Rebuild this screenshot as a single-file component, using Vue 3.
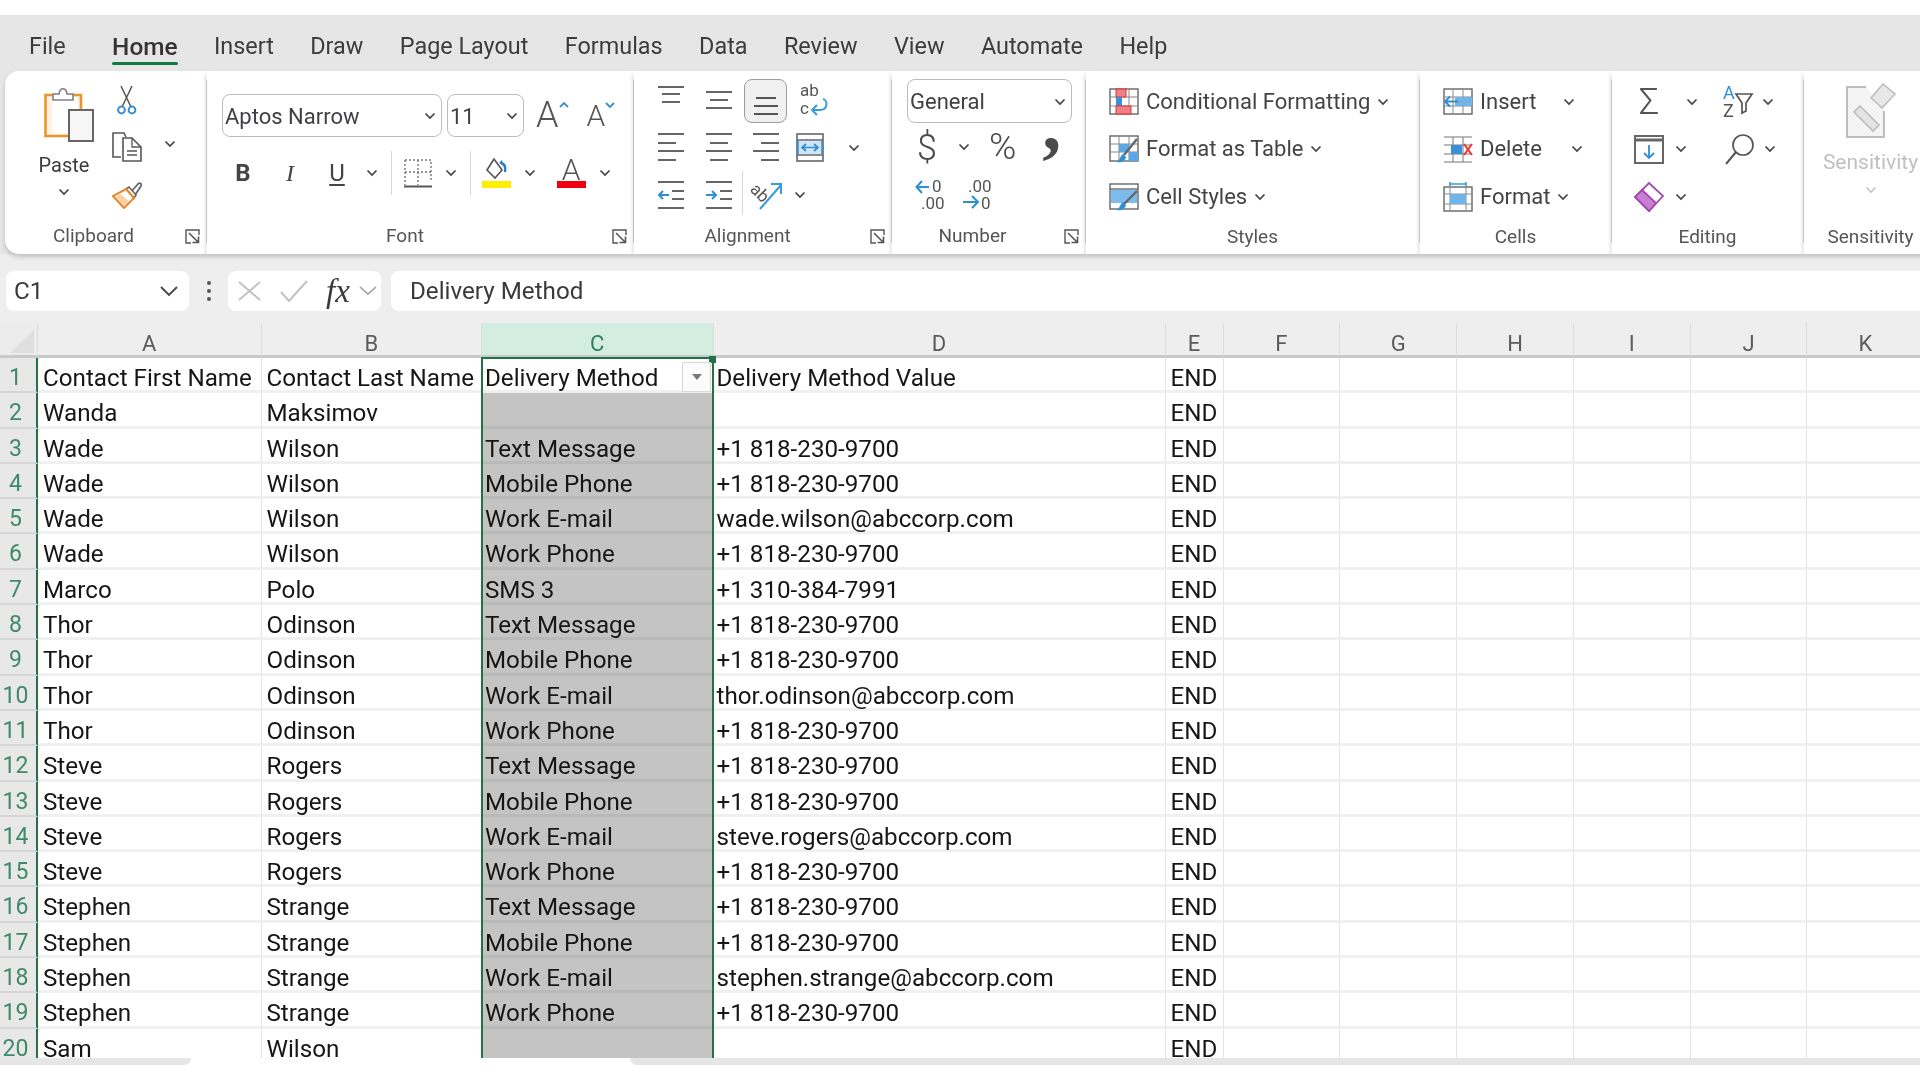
<script setup>
import { h } from "vue";

const tabs = ["File", "Home", "Insert", "Draw", "Page Layout", "Formulas", "Data", "Review", "View", "Automate", "Help"];
const letters = ["A", "B", "C", "D", "E", "F", "G", "H", "I", "J", "K"];

const phone = "+1 818-230-9700";

function person(first, last, email) {
  return [
    [first, last, "Text Message", phone],
    [first, last, "Mobile Phone", phone],
    [first, last, "Work E-mail", email],
    [first, last, "Work Phone", phone],
  ];
}

const rows = [
  ["Contact First Name", "Contact Last Name", "Delivery Method", "Delivery Method Value"],
  ["Wanda", "Maksimov", "", ""],
  ...person("Wade", "Wilson", "wade.wilson@abccorp.com"),
  ["Marco", "Polo", "SMS 3", "+1 310-384-7991"],
  ...person("Thor", "Odinson", "thor.odinson@abccorp.com"),
  ...person("Steve", "Rogers", "steve.rogers@abccorp.com"),
  ...person("Stephen", "Strange", "stephen.strange@abccorp.com"),
  ["Sam", "Wilson", "", ""],
];

const emptyCols = 6;

// small dropdown arrow used all over the ribbon
const Chev = (props) =>
  h("svg", { width: 12, height: 8, viewBox: "0 0 12 8", fill: "none" }, [
    h("path", { d: "M1.5 1.5 6 6l4.5-4.5", stroke: props.color || "#444", "stroke-width": 1.7 }),
  ]);
Chev.props = ["color"];

const Launcher = () =>
  h("svg", { width: 15, height: 15, viewBox: "0 0 15 15", fill: "none", stroke: "#555", "stroke-width": 1.4 }, [
    h("path", { d: "M14 6V1H1v13h5" }),
    h("path", { d: "M4 4l9 9M7.5 13.5h6v-6", "stroke-width": 1.6 }),
  ]);
</script>

<template>
  <div class="page">
    <div class="top-gap"></div>

    <div class="tabs">
      <span v-for="t in tabs" :key="t" class="tab" :class="{ on: t === 'Home' }">{{ t }}</span>
    </div>

    <div class="ribbon">
      <!-- Clipboard -->
      <section class="group w-clip">
        <div class="body clip-body">
          <div class="paste">
            <svg class="paste-ic" width="50" height="56" viewBox="0 0 50 56" fill="none">
              <path d="M2 8h34v42H2z" fill="#fdf3e0" />
              <path d="M8 10h26v36H8z" fill="#fff" />
              <path d="M9 8H1.500v41H25" stroke="#e8962e" stroke-width="2.6" />
              <path d="M29 8h8v14" stroke="#e8962e" stroke-width="2.6" />
              <path d="M9 13V7h6c1-7 7-7 8 0h6v6z" fill="#fff" stroke="#808080" stroke-width="1.6" />
              <rect x="25" y="23" width="24" height="31" fill="#f6f6f6" stroke="#666" stroke-width="2" />
            </svg>
            <span class="paste-text">Paste</span>
            <Chev />
          </div>
          <div class="small-col">
            <div class="cell-c">
              <svg width="22" height="30" viewBox="0 0 22 30" fill="none">
                <path d="M6 22 16 1M15 22 5 1" stroke="#555" stroke-width="1.5" />
                <circle cx="5.500" cy="25" r="3.400" stroke="#3a8fd0" stroke-width="2" />
                <circle cx="16" cy="25" r="3.400" stroke="#3a8fd0" stroke-width="2" />
              </svg>
            </div>
            <div class="cell-c">
              <svg width="30" height="30" viewBox="0 0 30 30" fill="none" stroke="#555" stroke-width="1.6">
                <path d="M9 25H1V1h11l2 4" />
                <path d="M11 6h9l9 9v14H11z" fill="#fff" />
                <path d="M20 6v9h9M15 19h10M15 23h10" stroke-width="1.3" />
              </svg>
            </div>
            <div class="cell-c">
              <svg width="30" height="28" viewBox="0 0 30 28" fill="none">
                <path d="M19 11l7-8c2-2 4 0 3 2l-6 9z" fill="#fff" stroke="#666" stroke-width="1.800" />
                <path d="M14 8l3-2 7 8-2 3z" fill="#fff" stroke="#666" stroke-width="1.600" />
                <path d="M14 8 22 17 12 27 1 15z" fill="#fff" stroke="#e8862a" stroke-width="2" />
                <path d="M4 16 12 25 17 20 8 13z" fill="#f9cf9f" />
              </svg>
            </div>
          </div>
          <div class="clip-chev"><Chev /></div>
        </div>
        <footer class="label">Clipboard<span class="launch"><Launcher /></span></footer>
      </section>
      <i class="sep"></i>

      <!-- Font -->
      <section class="group w-font">
        <div class="body font-body">
          <div class="font-row1">
            <div class="combo font-name"><span>Aptos Narrow</span><Chev /></div>
            <div class="combo font-size"><span>11</span><Chev /></div>
            <div class="grow-a">A<svg width="10" height="6" viewBox="0 0 10 6" fill="none"><path d="M1 5l4-4 4 4" stroke="#3a8fd0" stroke-width="1.8" /></svg></div>
            <div class="shrink-a">A<svg width="10" height="6" viewBox="0 0 10 6" fill="none"><path d="M1 1l4 4 4-4" stroke="#3a8fd0" stroke-width="1.8" /></svg></div>
          </div>
          <div class="font-row2">
            <span class="fbtn bold">B</span>
            <span class="fbtn ital">I</span>
            <span class="fbtn under">U</span>
            <Chev />
            <i class="mini-sep"></i>
            <svg width="28" height="29" viewBox="0 0 28 29" fill="none">
              <path d="M1 1h26v22M1 1v25M14 1v25M1 13h26" stroke="#777" stroke-width="1.4" stroke-dasharray="2 2" />
              <path d="M0 27.500h28" stroke="#555" stroke-width="2" />
            </svg>
            <Chev />
            <i class="mini-sep"></i>
            <span class="paint">
              <svg width="26" height="23" viewBox="0 0 26 23" fill="none">
                <path d="M10 1 3 12l8 8 7-8z" fill="#fff" stroke="#555" stroke-width="1.6" />
                <path d="M21 14c1-5 0-8-4-9" stroke="#2a78c8" stroke-width="2.4" />
                <path d="M18 2l-3 3 4 2" fill="#2a78c8" />
              </svg>
              <b class="bar yellow"></b>
            </span>
            <Chev />
            <span class="color-a"><em>A</em><b class="bar red"></b></span>
            <Chev />
          </div>
        </div>
        <footer class="label off">Font<span class="launch"><Launcher /></span></footer>
      </section>
      <i class="sep"></i>

      <!-- Alignment -->
      <section class="group w-align">
        <div class="body align-body">
          <div class="acell a-top">
            <svg width="26" height="18" viewBox="0 0 26 18"><path d="M0 1h26M4 8h18M4 16h18" stroke="#666" stroke-width="2" /></svg>
          </div>
          <div class="acell">
            <svg width="26" height="18" viewBox="0 0 26 18"><path d="M0 1h26M4 9h18M0 17h26" stroke="#666" stroke-width="2" /></svg>
          </div>
          <div class="acell picked">
            <svg width="26" height="18" viewBox="0 0 26 18"><path d="M3 1h20M1 9h24M1 17h24" stroke="#555" stroke-width="2" /></svg>
          </div>
          <div class="acell wrap-ic">
            <svg class="free" width="30" height="36" viewBox="0 0 30 36">
              <text x="1" y="14" class="ictext">ab</text>
              <text x="1" y="32" class="ictext">c</text>
              <path d="M13 28h8c8 0 8-10 3-11" fill="none" stroke="#3a9ad9" stroke-width="2" />
              <path d="M18 23l-5 5 5 5" fill="none" stroke="#3a9ad9" stroke-width="2" />
            </svg>
          </div>

          <div class="acell">
            <svg width="26" height="30" viewBox="0 0 26 30"><path d="M0 2h26M0 11h18M0 19h26M0 28h18" stroke="#666" stroke-width="2" /></svg>
          </div>
          <div class="acell">
            <svg width="26" height="30" viewBox="0 0 26 30"><path d="M0 2h26M4 11h18M0 19h26M4 28h18" stroke="#666" stroke-width="2" /></svg>
          </div>
          <div class="acell">
            <svg width="26" height="30" viewBox="0 0 26 30"><path d="M0 2h26M8 11h18M0 19h26M8 28h18" stroke="#666" stroke-width="2" /></svg>
          </div>
          <div class="acell merge">
            <svg width="28" height="29" viewBox="0 0 28 29" fill="none">
              <rect x="1" y="1" width="26" height="27" stroke="#666" stroke-width="1.6" />
              <path d="M1 7h26M1 22h26" stroke="#666" stroke-width="1.3" />
              <rect x="2" y="8" width="24" height="13" fill="#cfe6f7" />
              <path d="M2 8v13M26 8v13" stroke="#2f8fd6" stroke-width="1.5" />
              <path d="M6 14.500h16M10 11l-4 3.500 4 3.500M18 11l4 3.500-4 3.500" stroke="#2f8fd6" stroke-width="1.7" />
            </svg>
            <span class="merge-chev"><Chev /></span>
          </div>

          <div class="acell">
            <svg width="26" height="30" viewBox="0 0 26 30" fill="none">
              <path d="M0 2h26M14 11h12M14 19h12M0 28h26" stroke="#666" stroke-width="2" />
              <path d="M11 15H1M5 11l-4 4 4 4" stroke="#2f8fd6" stroke-width="2" />
            </svg>
          </div>
          <div class="acell">
            <svg width="26" height="30" viewBox="0 0 26 30" fill="none">
              <path d="M0 2h26M14 11h12M14 19h12M0 28h26" stroke="#666" stroke-width="2" />
              <path d="M0 15h10M6 11l4 4-4 4" stroke="#2f8fd6" stroke-width="2" />
            </svg>
          </div>
          <div class="acell orient">
            <i class="mini-sep tall"></i>
            <svg class="free" width="32" height="28" viewBox="0 0 32 28" fill="none">
              <text x="0" y="15" class="ictext" transform="rotate(45 6 10)">ab</text>
              <path d="M9 28 30 4M20 3h10v10" stroke="#3a9ad9" stroke-width="2" />
            </svg>
            <span class="orient-chev"><Chev /></span>
          </div>
        </div>
        <footer class="label off">Alignment<span class="launch"><Launcher /></span></footer>
      </section>
      <i class="sep"></i>

      <!-- Number -->
      <section class="group w-num">
        <div class="body num-body">
          <div class="combo num-combo"><span>General</span><Chev /></div>
          <div class="num-row">
            <span class="sym dollar">$</span>
            <span class="num-c"><Chev /></span>
            <span class="sym pct">%</span>
            <span class="sym comma">,</span>
          </div>
          <div class="num-row dec">
            <svg class="free" width="30" height="30" viewBox="0 0 30 30" fill="none">
              <text x="17" y="13" class="ictext">0</text>
              <text x="6" y="30" class="ictext">.00</text>
              <path d="M14 8H2M7 2 1.500 8 7 14" stroke="#2f8fd6" stroke-width="2" />
            </svg>
            <svg class="free" width="30" height="30" viewBox="0 0 30 30" fill="none">
              <text x="6" y="13" class="ictext">.00</text>
              <text x="19" y="30" class="ictext">0</text>
              <path d="M1 23h14M10 17l6 6-6 6" stroke="#2f8fd6" stroke-width="2" />
            </svg>
          </div>
        </div>
        <footer class="label off-n">Number<span class="launch"><Launcher /></span></footer>
      </section>
      <i class="sep"></i>

      <!-- Styles -->
      <section class="group w-styles">
        <div class="body list-body">
          <div class="list-row">
            <svg width="30" height="27" viewBox="0 0 30 27" fill="none">
              <rect x="1" y="1" width="28" height="25" fill="#fff" stroke="#666" stroke-width="1.4" />
              <path d="M1 9h28M1 18h28M10 1v25M20 1v25" stroke="#888" />
              <rect x="7" y="1" width="10" height="8" fill="#f07f86" stroke="#d33" />
              <rect x="7" y="9" width="6" height="9" fill="#3a8fd6" />
              <rect x="7" y="18" width="15" height="8" fill="#f07f86" stroke="#d33" />
            </svg>
            <span>Conditional Formatting</span><Chev />
          </div>
          <div class="list-row">
            <svg width="30" height="28" viewBox="0 0 30 28" fill="none">
              <rect x="1" y="1" width="28" height="25" fill="#fff" stroke="#666" stroke-width="1.4" />
              <path d="M1 9h28M1 17h28M10 1v25M20 1v25" stroke="#888" />
              <path d="M10 9h10v8H10zM20 17h9v9h-9z" fill="#5aa9e6" />
              <path d="M28 4 15 20" stroke="#666" stroke-width="2.400" />
              <path d="M8 27c4 1 8-1 9-5l-3-3c-3 2-3 6-6 8z" fill="#2f8fd6" />
            </svg>
            <span>Format as Table</span><Chev />
          </div>
          <div class="list-row">
            <svg width="30" height="28" viewBox="0 0 30 28" fill="none">
              <rect x="1" y="1" width="28" height="25" fill="#fff" stroke="#666" stroke-width="1.4" />
              <path d="M1 6h28" stroke="#666" stroke-width="1.4" />
              <rect x="2" y="7" width="26" height="13" fill="#7cbcec" />
              <path d="M28 8 15 21" stroke="#666" stroke-width="2.400" />
              <path d="M8 27c4 1 8-1 9-5l-3-3c-3 2-3 6-6 8z" fill="#2f8fd6" />
            </svg>
            <span>Cell Styles</span><Chev />
          </div>
        </div>
        <footer class="label">Styles</footer>
      </section>
      <i class="sep"></i>

      <!-- Cells -->
      <section class="group w-cells">
        <div class="body list-body">
          <div class="list-row">
            <svg width="30" height="27" viewBox="0 0 30 27" fill="none">
              <rect x="1" y="1" width="28" height="25" fill="#fff" stroke="#666" stroke-width="1.4" />
              <path d="M1 9h28M1 18h28M10 1v25M20 1v25" stroke="#888" />
              <rect x="12" y="9" width="17" height="9" fill="#73b4e8" />
              <path d="M15 13.500H2M7 8.500l-5 5 5 5" stroke="#2f8fd6" stroke-width="2" />
            </svg>
            <span>Insert</span><span class="cc-chev insert"><Chev /></span>
          </div>
          <div class="list-row">
            <svg width="30" height="27" viewBox="0 0 30 27" fill="none">
              <path d="M1 1h28M1 26h28M1 9h28M1 18h28M10 1v25M20 1v25" stroke="#777" />
              <rect x="8" y="9" width="11" height="9" fill="#3a8fd6" />
              <path d="M21 8l8 11M29 8l-8 11" stroke="#e33" stroke-width="2" />
            </svg>
            <span>Delete</span><span class="cc-chev del"><Chev /></span>
          </div>
          <div class="list-row">
            <svg width="30" height="30" viewBox="0 0 30 30" fill="none">
              <path d="M7 2h16M7 0v4M23 0v4" stroke="#3a9ad9" stroke-width="1.6" />
              <rect x="1" y="5" width="28" height="24" fill="#fff" stroke="#666" stroke-width="1.4" />
              <path d="M1 12h28M1 22h28M7 5v24M23 5v24" stroke="#888" />
              <rect x="7" y="12" width="16" height="10" fill="#73b4e8" />
            </svg>
            <span>Format</span><Chev />
          </div>
        </div>
        <footer class="label">Cells</footer>
      </section>
      <i class="sep"></i>

      <!-- Editing -->
      <section class="group w-edit">
        <div class="body edit-body">
          <div class="edit-row">
            <span class="sigma">Σ</span><span class="e1"><Chev /></span>
            <svg class="sort free" width="30" height="32" viewBox="0 0 30 32" fill="none">
              <text x="0" y="13" class="az blue">A</text>
              <text x="0" y="31" class="az">Z</text>
              <path d="M13 8h16l-6 9v8l-4 2V17z" stroke="#555" stroke-width="1.7" />
            </svg>
            <span class="e2"><Chev /></span>
          </div>
          <div class="edit-row">
            <svg width="30" height="29" viewBox="0 0 30 29" fill="none">
              <rect x="1" y="1" width="28" height="27" fill="#fff" stroke="#666" stroke-width="2" />
              <path d="M1 5h28" stroke="#666" stroke-width="3" />
              <path d="M15 10v13M10 18l5 5 5-5" stroke="#2f8fd6" stroke-width="1.8" />
            </svg>
            <span class="e3"><Chev /></span>
            <svg class="find" width="30" height="32" viewBox="0 0 30 32" fill="none">
              <circle cx="18" cy="12" r="10" stroke="#555" stroke-width="1.7" />
              <path d="M11 19 1 31" stroke="#555" stroke-width="2" />
            </svg>
            <span class="e4"><Chev /></span>
          </div>
          <div class="edit-row">
            <svg width="30" height="30" viewBox="0 0 30 30" fill="none">
              <path d="M15 1 29 14 15 29 1 15z" fill="#fff" stroke="#a349b5" stroke-width="1.8" />
              <path d="M8 8 22 21 15 29 1 15z" fill="#c77fd2" stroke="#a349b5" stroke-width="1.8" />
            </svg>
            <span class="e3"><Chev /></span>
          </div>
        </div>
        <footer class="label">Editing</footer>
      </section>
      <i class="sep"></i>

      <!-- Sensitivity -->
      <section class="group w-sens">
        <div class="body sens-body">
          <svg width="50" height="56" viewBox="0 0 50 56" fill="none">
            <path d="M20 4H1v50h37V28" fill="#f4f4f4" stroke="#bdbdbd" stroke-width="2" />
            <path d="M14 23l19 19-6 6L8 29z" fill="#e4e4e4" stroke="#bdbdbd" stroke-width="1.6" />
            <path d="M25 15 37 1l12 10-13 14-4-4z" fill="#e8e8e8" stroke="#bdbdbd" stroke-width="1.6" />
          </svg>
          <span class="sens-text">Sensitivity</span>
          <Chev color="#c4c4c4" />
        </div>
        <footer class="label">Sensitivity</footer>
      </section>
    </div>

    <div class="formula">
      <div class="namebox"><span>C1</span><svg width="20" height="12" viewBox="0 0 20 12" fill="none"><path d="M2 2l8 8 8-8" stroke="#444" stroke-width="1.8" /></svg></div>
      <div class="dots"><i></i><i></i><i></i></div>
      <div class="fx-box">
        <svg width="23" height="20" viewBox="0 0 23 20" fill="none"><path d="M1 1l21 18M22 1 1 19" stroke="#c2c2c2" stroke-width="2" /></svg>
        <svg class="ok" width="28" height="22" viewBox="0 0 28 22" fill="none"><path d="M1 12l8 9L27 1" stroke="#c2c2c2" stroke-width="2" /></svg>
        <span class="fx">fx</span>
        <svg class="fx-chev" width="18" height="10" viewBox="0 0 18 10" fill="none"><path d="M1 1l8 7 8-7" stroke="#9a9a9a" stroke-width="1.500" /></svg>
      </div>
      <div class="input">Delivery Method</div>
    </div>

    <div class="sheet">
      <div class="row head">
        <div class="corner"><i></i></div>
        <div v-for="l in letters" :key="l" class="col-h" :class="{ sel: l === 'C' }">{{ l }}</div>
        <div class="col-h"></div>
      </div>
      <div v-for="(r, i) in rows" :key="i" class="row">
        <div class="row-h">{{ i + 1 }}</div>
        <div v-for="(v, c) in r" :key="c" class="cell" :class="{ grey: c === 2 && i > 0 }">{{ v }}</div>
        <div class="cell">END</div>
        <div v-for="n in emptyCols" :key="n" class="cell"></div>
        <div class="cell"></div>
      </div>
      <!-- selected column border and autofilter button sit over the grid -->
      <div class="selection"><b class="handle"></b></div>
      <div class="filter-btn"><i></i></div>
    </div>

    <div class="hscroll">
      <i class="sb-left"></i>
      <i class="sb-right"></i>
    </div>
  </div>
</template>

<style scoped>
.page {
  width: 1920px;
  height: 1080px;
  overflow: hidden;
  background: #fff;
  font-family: Roboto, "Liberation Sans", sans-serif;
  color: #3c3c3c;
  filter: blur(0.4px);
}

.top-gap {
  height: 15px;
}

.free {
  overflow: visible;
}

.tabs {
  display: flex;
  gap: 36.4px;
  height: 56px;
  padding: 15px 0 0 29px;
  box-sizing: border-box;
  background: #e6e6e6;
  font-size: 23.4px;
  line-height: 33px;
}

.tab {
  position: relative;
}

.tab.on {
  margin-left: 10px;
  font-size: 24.4px;
  font-weight: 500;
  color: #333;
}

.tab.on::after {
  content: "";
  position: absolute;
  left: 0;
  right: 0;
  top: 32px;
  height: 3px;
  border-radius: 2px;
  background: #107c41;
}

.ribbon {
  display: flex;
  height: 183px;
  padding-left: 5px;
  background: #e6e6e6;
}

.group {
  flex: none;
  display: flex;
  flex-direction: column;
  height: 183px;
  background: #fff;
  box-shadow: 0 3px 4px rgba(0, 0, 0, 0.18);
}

.w-clip {
  width: 201px;
  border-radius: 14px 0 0 14px;
}
.w-font {
  width: 426px;
}
.w-align {
  width: 257px;
}
.w-num {
  width: 193px;
}
.w-styles {
  width: 333px;
}
.w-cells {
  width: 191px;
}
.w-edit {
  width: 191px;
}
.w-sens {
  width: 133px;
}

.sep {
  flex: none;
  width: 1px;
  background: linear-gradient(#fff 9px, #d2d2d2 9px, #d2d2d2 172px, #fff 172px);
  box-shadow: 0 3px 4px rgba(0, 0, 0, 0.18);
}

.body {
  height: 155px;
  box-sizing: border-box;
}

.label {
  position: relative;
  text-align: center;
  font-size: 19px;
  line-height: 22px;
  color: #555;
}

.w-clip .label {
  padding-right: 24px;
  margin-top: -1px;
}

.off {
  padding-right: 30px;
  margin-top: -1px;
}

.off-n {
  padding-right: 32px;
  margin-top: -1px;
}

.launch {
  position: absolute;
  right: 6px;
  top: 4px;
  line-height: 0;
}

/* clipboard */
.clip-body {
  display: grid;
  grid-template-columns: 80px 46px 40px;
  padding: 5px 0 0 19px;
}

.paste {
  display: flex;
  flex-direction: column;
  align-items: center;
  padding-top: 11px;
}

.paste-ic {
  margin-left: 10px;
}

.paste-text {
  margin-top: 8px;
  font-size: 20px;
  line-height: 28px;
}

.paste svg:last-child {
  margin-top: 9px;
}

.small-col {
  display: grid;
  grid-template-rows: repeat(3, 47.5px);
}

.cell-c {
  display: flex;
  align-items: center;
  justify-content: center;
}

.clip-chev {
  display: flex;
  justify-content: center;
  padding-top: 64px;
}

/* font */
.font-body {
  padding: 23px 0 0 15px;
}

.font-row1 {
  display: flex;
  height: 43px;
}

.combo {
  display: flex;
  align-items: center;
  justify-content: space-between;
  box-sizing: border-box;
  height: 43px;
  padding: 1px 5px 0 2px;
  border: 1.5px solid #bcbcbc;
  border-radius: 8px;
  font-size: 22px;
  color: #3f3f46;
}

.font-name {
  width: 220px;
}

.font-size {
  width: 77px;
  margin-left: 5px;
}

.grow-a,
.shrink-a {
  display: flex;
  align-items: flex-start;
  line-height: 43px;
  color: #555;
  font-weight: 300;
}

.grow-a {
  margin-left: 12px;
  font-size: 36px;
}

.grow-a svg,
.shrink-a svg {
  margin-top: 8px;
}

.shrink-a {
  margin-left: 18px;
  font-size: 30px;
}

/* one column per button so each one stays centred on its slot */
.font-row2 {
  display: grid;
  grid-template-columns: 42px 52px 42px 28px 10px 43px 24px 14px 39px 28px 54px 14px;
  justify-items: center;
  align-items: center;
  height: 44px;
  margin-top: 14px;
}

.fbtn {
  font-size: 24px;
  color: #444;
}

.bold {
  font-weight: 700;
}

.ital {
  font-family: "Liberation Serif", serif;
  font-style: italic;
}

.under {
  text-decoration: underline;
  text-underline-offset: 3px;
}

.mini-sep {
  width: 1px;
  height: 44px;
  background: #d8d8d8;
}

.paint {
  display: flex;
  flex-direction: column;
  align-items: center;
  width: 29px;
  line-height: 0;
}

.bar {
  display: block;
  width: 29px;
  height: 7px;
}

.yellow {
  background: #ffee00;
}

.red {
  background: #ee0011;
}

.color-a {
  display: flex;
  flex-direction: column;
  align-items: center;
  width: 30px;
}

.color-a em {
  font-style: normal;
  font-size: 30px;
  line-height: 23px;
  font-weight: 300;
  color: #555;
}

/* alignment */
.align-body {
  display: grid;
  grid-template-columns: 48px 47px 48px 48px;
  grid-template-rows: 47.5px 47.5px 47.5px;
  padding: 5px 0 0 13px;
}

.acell {
  position: relative;
  display: flex;
  align-items: center;
  justify-content: center;
  line-height: 0;
}

.a-top {
  padding-bottom: 10px;
}

.picked {
  align-self: start;
  height: 44px;
  width: 43px;
  margin: 3px 0 0 2px;
  padding-top: 10px;
  box-sizing: border-box;
  background: #f0f0f0;
  border: 1.5px solid #9c9c9c;
  border-radius: 8px;
}

.merge {
  justify-content: flex-start;
  padding-left: 6px;
}

.merge-chev {
  position: absolute;
  left: 58px;
  top: 20px;
}

.orient {
  grid-column: span 2;
  justify-content: flex-start;
}

.tall {
  margin-right: 8px;
  align-self: flex-start;
}

.orient-chev {
  margin-left: 11px;
}

.ictext {
  font-family: Roboto, sans-serif;
  font-size: 17px;
  fill: #555;
}

/* number */
.num-body {
  padding: 8px 0 0 15px;
}

.num-combo {
  width: 165px;
  height: 44px;
}

.num-row {
  display: flex;
  align-items: center;
  height: 47px;
}

.sym {
  color: #4a4a4a;
}

.dollar {
  width: 24px;
  margin-left: 8px;
  margin-top: 3px;
  text-align: center;
  font-size: 36px;
  font-weight: 300;
}

.num-c {
  margin-left: 19px;
  line-height: 0;
}

.pct {
  margin-left: 19px;
  font-size: 37px;
  font-weight: 300;
}

.comma {
  margin-left: 26px;
  margin-top: -46px;
  font-family: "Liberation Serif", serif;
  font-size: 76px;
  font-weight: 700;
  line-height: 47px;
}

.dec {
  gap: 17px;
  padding-left: 8px;
}

/* styles / cells */
.list-body {
  display: grid;
  grid-template-rows: repeat(3, 47.5px);
  padding: 7px 0 0 23px;
}

.list-row {
  display: flex;
  align-items: center;
  gap: 7px;
  font-size: 22px;
  color: #444;
  line-height: 0;
}

.list-row span {
  line-height: 30px;
}

.cc-chev {
  line-height: 0 !important;
}

.insert {
  margin-left: 20px;
}

.del {
  margin-left: 22px;
}

/* editing */
.edit-body {
  padding: 7px 0 0 22px;
}

.edit-row {
  display: flex;
  align-items: center;
  height: 47.5px;
  line-height: 0;
}

.sigma {
  width: 30px;
  font-size: 36px;
  line-height: 40px;
  font-weight: 300;
  color: #555;
  text-align: center;
}

.e1 {
  margin-left: 22px;
}

.sort {
  margin-left: 25px;
}

.e2,
.e4 {
  margin-left: 9px;
}

.e3 {
  margin-left: 11px;
}

.find {
  margin-left: 38px;
}

.az {
  font-family: Roboto, sans-serif;
  font-size: 18px;
  fill: #555;
}

.az.blue {
  fill: #2f8fd6;
}

/* sensitivity */
.sens-body {
  display: flex;
  flex-direction: column;
  align-items: center;
  padding: 12px 0 0;
  line-height: 0;
}

.sens-text {
  margin-top: 10px;
  font-size: 21px;
  line-height: 26px;
  color: #c0c0c0;
}

.sens-body svg:last-child {
  margin-top: 11px;
}

/* formula bar */
.formula {
  display: flex;
  align-items: center;
  height: 69px;
  padding: 17px 0 12px 6px;
  box-sizing: border-box;
  background: #eeeeee;
}

.namebox,
.fx-box,
.input {
  display: flex;
  align-items: center;
  height: 40px;
  box-sizing: border-box;
  background: #fff;
  border-radius: 8px;
  font-size: 24.2px;
  color: #3a3a3a;
}

.namebox {
  justify-content: space-between;
  width: 183px;
  padding: 0 10px 0 8px;
}

.dots {
  display: flex;
  flex-direction: column;
  gap: 4px;
  width: 39px;
  align-items: center;
}

.dots i {
  width: 4px;
  height: 4px;
  border-radius: 50%;
  background: #555;
}

.fx-box {
  width: 153px;
  padding-left: 10px;
}

.ok {
  margin-left: 19px;
}

.fx {
  margin-left: 18px;
  font-family: "Liberation Serif", serif;
  font-style: italic;
  font-size: 33px;
}

.fx-chev {
  margin-left: 9px;
}

.input {
  flex: 1;
  margin-left: 10px;
  padding-left: 19px;
  border-radius: 8px 0 0 8px;
}

/* sheet */
.sheet {
  position: relative;
  height: 735px;
  overflow: hidden;
  background: #fff;
}

.row {
  display: grid;
  grid-template-columns: 38px 223.5px 220.5px 231.5px 452px 58px repeat(6, 116.8px) 1fr;
  grid-template-rows: 35.3px;
  height: 35.3px;
}

.row.head {
  grid-template-rows: 35px;
  height: 35px;
}

.corner {
  position: relative;
  box-sizing: border-box;
  background: #ececec;
  border-right: 1px solid #ddd;
  border-bottom: 3px solid #c9c9c9;
}

.corner i {
  position: absolute;
  right: 3px;
  bottom: 2px;
  width: 0;
  height: 0;
  border-left: 24px solid transparent;
  border-bottom: 23px solid #dfdfdf;
}

.col-h {
  box-sizing: border-box;
  background: #eeeeee;
  border-right: 1px solid #dcdcdc;
  border-bottom: 3px solid #c9c9c9;
  text-align: center;
  font-size: 22px;
  line-height: 42px;
  color: #5c5c5c;
}

.col-h.sel {
  background: #d3eee0;
  color: #2f7d5a;
}

.row-h {
  box-sizing: border-box;
  padding-right: 5px;
  background: #e8e8e8;
  border-right: 2px solid #217346;
  border-bottom: 2px solid #d6d6d6;
  text-align: center;
  font-size: 23px;
  line-height: 39px;
  color: #3f8a68;
}

.cell {
  box-sizing: border-box;
  padding-left: 5px;
  border-right: 1px solid #e3e3e3;
  border-bottom: 3px solid #f0f0f0;
  font-size: 24.2px;
  line-height: 40px;
  color: #161616;
  white-space: nowrap;
}

.row > .cell:nth-child(4),
.row > .cell:nth-child(5) {
  padding-left: 3px;
}

.cell.grey {
  background: #c4c4c4;
  border-bottom-color: #b9b9b9;
}

.selection {
  position: absolute;
  left: 481px;
  top: 34px;
  bottom: -3px;
  width: 233px;
  box-sizing: border-box;
  border: 2.5px solid #217346;
}

.handle {
  position: absolute;
  right: -4px;
  top: -3px;
  width: 7px;
  height: 7px;
  background: #217346;
}

.filter-btn {
  position: absolute;
  left: 682px;
  top: 39px;
  width: 29px;
  height: 30px;
  box-sizing: border-box;
  display: flex;
  align-items: center;
  justify-content: center;
  background: #fcfcfc;
  border: 1px solid #d8d8d8;
}

.filter-btn i {
  width: 0;
  height: 0;
  border-left: 5px solid transparent;
  border-right: 5px solid transparent;
  border-top: 6px solid #777;
}

.hscroll {
  display: flex;
  justify-content: space-between;
  height: 7px;
}

.sb-left {
  width: 191px;
  background: #e6e6e6;
  border-radius: 0 0 7px 0;
}

.sb-right {
  width: 1290px;
  background: #e6e6e6;
  border-radius: 0 0 0 7px;
}
</style>

<style>
html,
body {
  margin: 0;
  background: #fff;
}
</style>
